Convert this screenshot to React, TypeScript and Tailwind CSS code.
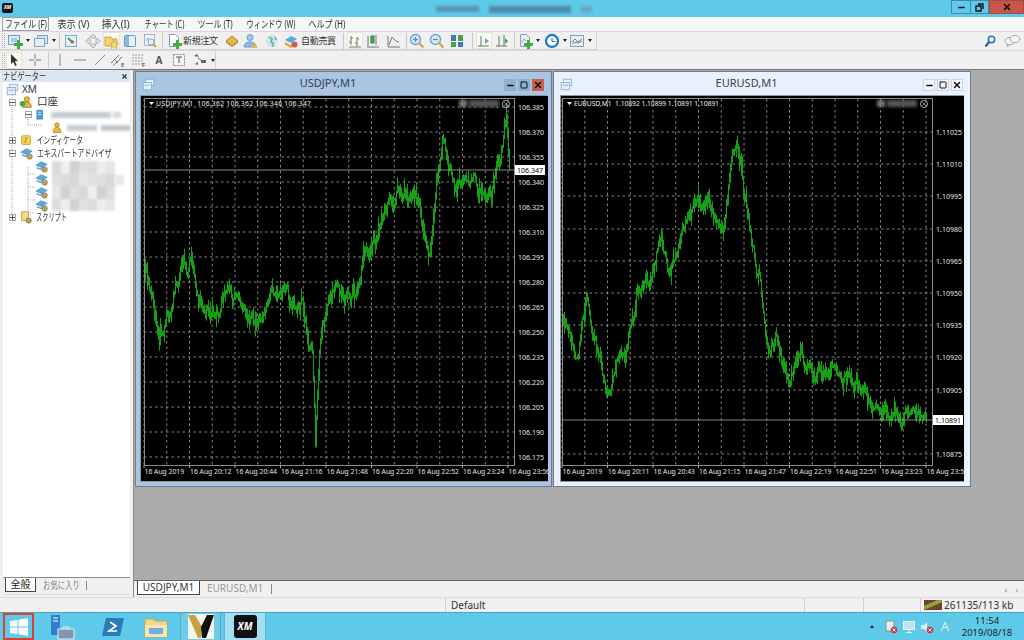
import type { ReactNode } from 'react';
import { Minus, Square, X } from 'lucide-react';

// small icon wrapper, everything in a 16x16 box
function I({ children, s = 16 }: { children: ReactNode; s?: number }) {
  return (
    <svg width={s} height={s} viewBox="0 0 16 16" className="shrink-0">
      {children}
    </svg>
  );
}

const Plus = () => <path d="M10 7h3v3h3v3h-3v3h-3v-3H7v-3h3z" fill="#3cae3c" />;
const Arrow = () => <span className="ml-[3px] w-0 h-0 border-x-[2.5px] border-x-transparent border-t-[3px] border-t-[#222]" />;

const ChartWin = () => (
  <>
    <rect x="1.5" y="2.5" width="11" height="9" fill="#dbe9f7" stroke="#6f9cc4" />
    <rect x="4" y="5" width="6" height="4" fill="#a4cbea" />
  </>
);
const WinIcon = () => (
  <I s={13}>
    <rect x="4.5" y="1.5" width="10" height="8" fill="#e6f0fa" stroke="#7fabd2" />
    <rect x="1.5" y="5.5" width="10" height="9" fill="#e6f0fa" stroke="#7fabd2" />
    <path d="M3 8h7v2H3z" fill="#a8cbe8" />
  </I>
);
const Gear = () => <circle cx="11" cy="12" r="3" fill="#c9a23a" stroke="#7b7b7b" />;
const EaIcon = () => (
  <I s={14}>
    <path d="M1 7l6-4 7 3-6 4z" fill="#5aa8dc" stroke="#3f7fab" strokeWidth=".6" />
    <path d="M2 10l5 2 4-2" fill="none" stroke="#5aa8dc" strokeWidth="1.6" />
    <Gear />
  </I>
);
const Bars = () => (
  <path d="M4 3v9M2 9h2M4 5h2M10 4v9M8 10h2M10 6h2M2 14h12" stroke="#5f7a68" fill="none" />
);
const Triangle = () => <span className="w-0 h-0 border-x-[2.5px] border-x-transparent border-b-[3px] border-b-[#222]" />;

function Sep() {
  return (
    <div className="w-[6px] h-[16px] flex justify-center shrink-0">
      <div className="w-px bg-[#c8c8c8]" />
    </div>
  );
}

function Tb({ className, on, children }: { className: string; on?: boolean; children: ReactNode }) {
  return (
    <div className={`h-[17px] flex items-center justify-center shrink-0 ${on ? 'bg-[#fbfaf2] border border-[#e4e4da]' : ''} ${className}`}>
      {children}
    </div>
  );
}

function Grip() {
  return <div className="w-[3px] h-[15px] ml-[2px] mr-px border-x border-dotted border-[#b5b5b5] shrink-0" />;
}

// label, box classes, squeeze for the narrow kana of the original UI font
const menus: [string, string, string][] = [
  ['ファイル (F)', 'w-[47px] ml-[2px] border border-[#a0a0a0]', 'scale-x-[.78]'],
  ['表示 (V)', 'w-[36px] ml-[6px]', 'scale-x-[.92]'],
  ['挿入(I)', 'w-[30px] ml-[10px]', 'scale-x-[.95]'],
  ['チャート (C)', 'w-[44px] ml-[11px]', 'scale-x-[.73]'],
  ['ツール (T)', 'w-[38px] ml-[10px]', 'scale-x-[.8]'],
  ['ウィンドウ (W)', 'w-[52px] ml-[11px]', 'scale-x-[.72]'],
  ['ヘルプ (H)', 'w-[40px] ml-[10px]', 'scale-x-[.8]'],
];

// price walk for the charts, [x, y] in page pixels
const jpyPath = [
  [144, 270], [150, 292], [158, 335], [165, 318], [172, 292], [180, 272], [190, 258], [200, 300], [215, 312], [225, 292],
  [240, 302], [255, 322], [265, 302], [280, 296], [300, 302], [306, 335], [311, 348], [314, 436], [318, 350], [325, 305],
  [335, 278], [345, 298], [355, 292], [362, 258], [375, 238], [385, 200], [400, 186], [415, 196], [428, 245], [435, 185],
  [441, 132], [450, 175], [470, 185], [490, 192], [498, 170], [505, 122], [509, 172],
];
const eurPath = [
  [562, 322], [575, 350], [585, 292], [595, 348], [605, 388], [612, 370], [625, 345], [635, 292], [650, 272], [660, 238],
  [668, 268], [680, 232], [695, 205], [715, 205], [722, 228], [728, 190], [734, 138], [742, 190], [752, 245], [760, 288],
  [766, 350], [775, 330], [785, 378], [800, 350], [815, 368], [830, 368], [845, 378], [860, 388], [875, 406], [895, 416],
  [915, 426], [926, 420],
];

function sticks(path: number[][], seed: number) {
  let s = seed;
  const rnd = () => {
    s = (s * 16807) % 2147483647;
    return s / 2147483647;
  };
  let d = '';
  let wander = 0;
  let prev = path[0][1];
  for (let i = 0; i < path.length - 1; i++) {
    const [x0, y0] = path[i];
    const [x1, y1] = path[i + 1];
    for (let x = x0; x < x1; x += 1) {
      const y = y0 + ((y1 - y0) * (x - x0)) / (x1 - x0);
      wander = wander * 0.7 + (rnd() - 0.5) * 14;
      const cur = y + wander;
      const up = 1 + rnd() * rnd() * 13;
      const dn = 1 + rnd() * rnd() * 13;
      d += `M${x + 0.5} ${(Math.min(cur, prev) - up).toFixed(1)}V${(Math.max(cur, prev) + dn).toFixed(1)}`;
      prev = cur;
    }
  }
  return d;
}

interface ChartProps {
  x0: number;
  w: number;
  plotL: number;
  plotR: number;
  head: string;
  headW: number;
  prices: [string, number][];
  times: string[];
  path: number[][];
  seed: number;
  last: string;
  lastY: number;
  blurX: number;
}

// the chart is a drawing, coordinates below are page pixels through the viewBox
function Chart({ x0, w, plotL, plotR, head, headW, prices, times, path, seed, last, lastY, blurX }: ChartProps) {
  const vLines = Array.from({ length: 17 }, (_, i) => plotL + i * 22.75);
  return (
    <svg width={w} height={385} viewBox={`${x0} 94 ${w} 385`} className="block bg-black">
      <g stroke="#a8a8a8" strokeDasharray="2.5 3" strokeWidth=".8">
        {prices.map(([, y]) => (
          <line key={y} x1={plotL} x2={plotR} y1={y} y2={y} />
        ))}
        {vLines.map((x) => (
          <line key={x} x1={x} x2={x} y1={97} y2={463} />
        ))}
      </g>
      <path d={sticks(path, seed)} stroke="#16a016" strokeWidth="1" fill="none" />
      <line x1={plotL} x2={plotR} y1={lastY} y2={lastY} stroke="#a8a8a8" strokeWidth=".8" />
      <rect x={plotL + 0.5} y={96.5} width={plotR - plotL} height={367} fill="none" stroke="#8c8c8c" />
      <path d={`M${plotL + 5} 100h5l-2.5 3z`} fill="#fff" />
      <text x={plotL + 12} y={103.5} fill="#eee" fontSize="6.8" textLength={headW} xmlSpace="preserve">{head}</text>
      <g className="blur-[1.5px]">
        <rect x={blurX} y={98} width="8" height="7" fill="#777" />
        <rect x={blurX + 10} y={98} width="30" height="7" fill="#555" />
      </g>
      <circle cx={blurX + 47} cy={102} r="3.6" fill="none" stroke="#ccc" strokeWidth=".8" />
      <path d={`M${blurX + 45} 100l4 4M${blurX + 49} 100l-4 4`} stroke="#ccc" strokeWidth=".6" />
      {prices.map(([label, y]) => (
        <text key={label} x={plotR + 4} y={y + 2.5} fill="#e4e4e4" fontSize="7">{label}</text>
      ))}
      <rect x={plotR + 1} y={lastY - 5} width="30" height="10" fill="#fff" />
      <text x={plotR + 3} y={lastY + 2.5} fill="#000" fontSize="7">{last}</text>
      {times.map((t, i) => (
        <g key={t}>
          <line x1={plotL + i * 45.5} x2={plotL + i * 45.5} y1={463} y2={466} stroke="#aaa" />
          <text x={plotL + 0.5 + i * 45.5} y={472} fill="#e4e4e4" fontSize="6.8">{t}</text>
        </g>
      ))}
    </svg>
  );
}

function ChartWindow({ title, active, children, className, inset }: { title: string; active?: boolean; children: ReactNode; className: string; inset: string }) {
  return (
    <div className={`h-[416px] border border-[#6d7b8a] shrink-0 flex flex-col ${active ? 'bg-[#a9c5e1]' : 'bg-[#e9f1fc]'} ${className}`}>
      <div className="h-[23px] relative flex items-center justify-center pr-[31px] shrink-0">
        <div className="absolute left-[6px] top-[6px]"><WinIcon /></div>
        <span className="text-[11px] text-[#33414f]">{title}</span>
        <div className="absolute right-[7px] top-[7px] flex gap-[2px]">
          <div className={`w-[12px] h-[12px] flex items-center justify-center ${active ? 'bg-[#8fb0d2]' : 'bg-[#f3f7fd] border border-[#ccd5e0]'}`}>
            <Minus size={9} strokeWidth={4} color="#111" />
          </div>
          <div className={`w-[12px] h-[12px] flex items-center justify-center ${active ? 'bg-[#8fb0d2]' : 'bg-[#f3f7fd] border border-[#ccd5e0]'}`}>
            <Square size={8} strokeWidth={3} color="#111" />
          </div>
          <div className={`w-[12px] h-[12px] flex items-center justify-center ${active ? 'bg-[#c8604f]' : 'bg-[#f3f7fd] border border-[#ccd5e0]'}`}>
            <X size={10} strokeWidth={3.5} color="#111" />
          </div>
        </div>
      </div>
      <div className={inset}>{children}</div>
    </div>
  );
}

function Exp({ open }: { open?: boolean }) {
  return (
    <div className="w-[7px] h-[7px] border border-[#a4a4a4] bg-white flex items-center justify-center relative shrink-0">
      <div className="w-[5px] h-px bg-[#555]" />
      {!open && <div className="absolute w-px h-[5px] bg-[#555]" />}
    </div>
  );
}

function Row({ className, children }: { className: string; children: ReactNode }) {
  return <div className={`h-[12.8px] flex items-center text-[10px] text-[#333] whitespace-nowrap relative ${className}`}>{children}</div>;
}

// katakana labels set in a narrow UI font in the reference
function Kana({ className, children }: { className: string; children: ReactNode }) {
  return <span className={`inline-block origin-left ${className}`}>{children}</span>;
}

const mosaic = ['#dcdcdc', '#e2e0e0', '#e8e6e6', '#d8d6d6', '#e0dede', '#d2d0d0', '#eeeeee'];

export default function App() {
  return (
    <div className="w-[1024px] h-[640px] flex flex-col overflow-hidden bg-[#f0f0f0] text-[#333] font-['Noto_Sans','Noto_Sans_CJK_JP',sans-serif]">
      {/* title bar */}
      <div className="h-[17px] bg-[#5fc9ea] flex items-start relative shrink-0">
        <div className="ml-[2px] mt-[3px] w-[11px] h-[10px] bg-[#111] rounded-[2px] text-white text-[5px] italic font-bold flex items-center justify-center">XM</div>
        <div className="absolute left-[436px] top-[6px] flex gap-[10px] blur-[1.5px]">
          <div className="w-[43px] h-[6px] bg-[#5a93b4]" />
          <div className="w-[82px] h-[7px] bg-[#4f8aa9]" />
          <div className="w-[11px] h-[6px] bg-[#6ba3c0]" />
        </div>
        <div className="ml-auto flex h-[14px]">
          <div className="w-[20px] border border-[#3d8aa8] flex items-center justify-center"><Minus size={9} strokeWidth={4} color="#111" /></div>
          <div className="w-[18px] border-y border-r border-[#3d8aa8] flex items-center justify-center">
            <svg width="9" height="9" viewBox="0 0 9 9"><path d="M3 1h5v5M1 3h5v5H1z" fill="none" stroke="#111" strokeWidth="1.4" /></svg>
          </div>
          <div className="w-[35px] bg-[#c8564c] border border-[#a34a44] flex items-center justify-center"><X size={10} strokeWidth={4} color="#111" /></div>
        </div>
      </div>

      {/* menu */}
      <div className="h-[15px] bg-[#f5f6f7] border-b border-[#d8d8d8] flex items-center text-[10px] shrink-0">
        {menus.map(([label, cls, squeeze]) => (
          <div key={label} className={`h-[14px] flex items-center justify-center whitespace-nowrap shrink-0 ${cls}`}>
            <span className={`inline-block ${squeeze}`}>{label}</span>
          </div>
        ))}
      </div>

      {/* toolbar 1 */}
      <div className="h-[19px] flex items-center border-b border-[#dcdcdc] shrink-0 relative">
        <div className="flex items-center w-[597px] h-full border-r border-[#d0d0d0] border-b">
          <Grip />
          <Tb className="w-[24px]"><I><ChartWin /><Plus /></I><Arrow /></Tb>
          <Tb className="w-[24px] ml-[2px]"><I><rect x="4.5" y="2.5" width="10" height="8" fill="#cfe2f5" stroke="#7ba5cb" /><rect x="1.5" y="5.5" width="10" height="8" fill="#e4eff9" stroke="#7ba5cb" /></I><Arrow /></Tb>
          <Sep />
          <Tb className="w-[18px]"><I><rect x="2.5" y="2.5" width="11" height="11" fill="#e2eef9" stroke="#7fadd4" /><path d="M5 5l3 3 3 1" stroke="#3cae3c" strokeWidth="2" fill="none" /><circle cx="9" cy="9" r="1.6" fill="#d9534f" /></I></Tb>
          <Tb className="w-[20px] ml-[3px]"><I><path d="M8 1l3 3-1 1h-4L5 4zM1 8l3-3 1 1v4l-1 1zM15 8l-3-3-1 1v4l1 1zM8 15l3-3-1-1H6l-1 1z" fill="#e0e5ea" stroke="#8c97a2" strokeWidth=".7" /></I></Tb>
          <Tb className="w-[17px]" on><I><path d="M1 4h6l1 2h5v7H1z" fill="#f1d678" stroke="#c9a23f" /><path d="M10 7l1.5 3 3 .3-2.2 2 .7 3-3-1.6-2.7 1.6.6-3-2.1-2 3-.3z" fill="#f6de78" stroke="#bb973c" strokeWidth=".6" /></I></Tb>
          <Tb className="w-[20px]"><I><rect x="2.5" y="2.5" width="11" height="11" rx="1" fill="#e6f0f9" stroke="#6f96bd" /><rect x="3" y="3" width="4" height="10" fill="#8db8de" /></I></Tb>
          <Tb className="w-[19px]"><I><rect x="2.5" y="1.5" width="10" height="11" fill="#eef4fb" stroke="#a0b5cc" /><circle cx="9" cy="9" r="3" fill="#e4eef8" stroke="#8ba2ba" /><path d="M11 11l3 3" stroke="#c9a23a" strokeWidth="2" /><path d="M4 8l2-3 2 2" stroke="#6fb0dc" fill="none" /></I></Tb>
          <Sep />
          <div className="w-[52px] flex items-center shrink-0 ml-px text-[9px] tracking-[-0.3px] whitespace-nowrap">
            <I><path d="M3.5 1.5h6l3 3v9h-9z" fill="#fff" stroke="#7f9ab4" /><Plus /></I>
            <span className="ml-px">新規注文</span>
          </div>
          <Tb className="w-[20px] ml-[4px]"><I><path d="M2 8l6-5 6 5-6 5z" fill="#e5bb48" stroke="#a6862c" /><path d="M2 8l6 5 6-5v2l-6 4-6-4z" fill="#c0924a" /></I></Tb>
          <Tb className="w-[16px]"><I><circle cx="8" cy="4.5" r="3" fill="#a4cbea" stroke="#6f9cc4" /><path d="M2 14c0-4 3-5 6-5s6 1 6 5z" fill="#8fbae2" stroke="#6f9cc4" /><path d="M10 12h5v3h-5z" fill="#e7b93c" /></I></Tb>
          <Tb className="w-[20px] ml-[4px]"><I><circle cx="8" cy="8" r="6" fill="#cfe3f2" /><path d="M5 4l3 2-1 3 2 1v4M11 4l1 3" stroke="#6fb96f" strokeWidth="1.6" fill="none" /></I></Tb>
          <div className="w-[52px] flex items-center shrink-0 ml-px text-[9px] tracking-[-0.3px] whitespace-nowrap">
            <I><path d="M2 7l6-4 6 3-6 4z" fill="#5aa8dc" /><path d="M2 9l6 3 6-3v3l-6 3-6-3z" fill="#e7a84c" /><circle cx="11.5" cy="11.5" r="3" fill="#d9534f" /></I>
            <span className="ml-[2px]">自動売買</span>
          </div>
          <div className="ml-[5px]"><Sep /></div>
          <Tb className="w-[16px] ml-px" on><I><Bars /></I></Tb>
          <Tb className="w-[16px] ml-[2px]"><I><path d="M3 3v10M11 2v10" stroke="#5f7a68" /><rect x="6" y="3" width="3" height="7" fill="#3cae3c" stroke="#3f7f3f" /><path d="M2 14h12" stroke="#5f7a68" /></I></Tb>
          <Tb className="w-[18px] ml-[4px]"><I><path d="M2 3v11h12" stroke="#6b7b70" fill="none" /><path d="M3 12l3-8 4 4 3 1" stroke="#6b7b70" fill="none" /></I></Tb>
          <Sep />
          <Tb className="w-[16px]"><I><circle cx="6.5" cy="6.5" r="5" fill="#d8ebf9" stroke="#6fa4cc" strokeWidth="1.4" /><path d="M10 10l4.5 4.5" stroke="#d2a640" strokeWidth="2.2" /><path d="M4 6.5h5M6.5 4v5" stroke="#4f94cc" strokeWidth="1.3" /></I></Tb>
          <Tb className="w-[20px] ml-[2px]"><I><circle cx="6.5" cy="6.5" r="5" fill="#d8ebf9" stroke="#6fa4cc" strokeWidth="1.4" /><path d="M10 10l4.5 4.5" stroke="#d2a640" strokeWidth="2.2" /><path d="M4 6.5h5" stroke="#4f94cc" strokeWidth="1.3" /></I></Tb>
          <Tb className="w-[20px]"><I><path d="M2 2h5v6H2z" fill="#3f78b8" /><path d="M9 2h5v6H9z" fill="#3fa84f" /><path d="M2 9h5v5H2z" fill="#3fa84f" /><path d="M9 9h5v5H9z" fill="#3f78b8" /></I></Tb>
          <div className="ml-[2px]"><Sep /></div>
          <Tb className="w-[16px] ml-px" on><I><path d="M5 3v10M2 13h11" stroke="#5f7a68" fill="none" /><path d="M9 5l4 3-4 3z" fill="#6fa4cc" /></I></Tb>
          <Tb className="w-[16px] ml-[2px]"><I><path d="M5 3v10M10 2v11M2 13h11" stroke="#5f7a68" fill="none" /><path d="M11 5l3 3-3 3z" fill="#3fa84f" /></I></Tb>
          <div className="ml-px"><Sep /></div>
          <Tb className="w-[24px] justify-start"><I><path d="M3.5 1.5h6l3 3v9h-9z" fill="#e8eef5" stroke="#8ba0b6" /><path d="M5 9l2-3 2 2" stroke="#6fb0dc" fill="none" /><Plus /></I><Arrow /></Tb>
          <Tb className="w-[24px] ml-[3px] justify-start"><I><circle cx="8" cy="8" r="6" fill="#fff" stroke="#1f7fc8" strokeWidth="2.4" /><path d="M8 5v3.5h3" stroke="#1f5f98" fill="none" /></I><Arrow /></Tb>
          <Tb className="w-[26px] ml-px justify-start"><I><rect x="1.5" y="2.5" width="13" height="11" fill="#e6eef7" stroke="#7f9fc0" /><path d="M3 9l3-3 3 3 4-3" stroke="#d9534f" fill="none" /><path d="M3 11l3-2 3 1 4-2" stroke="#3fa84f" fill="none" /></I><Arrow /></Tb>
        </div>
        <div className="absolute left-[984px] top-[3px]">
          <svg width="12" height="13" viewBox="0 0 12 13"><circle cx="7.500" cy="4.500" r="3.200" fill="#eef5fb" stroke="#2f6fb8" strokeWidth="1.500" /><path d="M5 7L1.500 11.500" stroke="#2f5f9f" strokeWidth="2.200" /></svg>
        </div>
        <div className="absolute left-[1004px] top-[2px]">
          <svg width="17" height="13" viewBox="0 0 17 13"><ellipse cx="6" cy="7" rx="5" ry="3.6" fill="#f4f4f4" stroke="#aaa" /><ellipse cx="11" cy="5" rx="5" ry="3.6" fill="#f4f4f4" stroke="#aaa" /><path d="M4 10l-1 3 3-2" fill="#f4f4f4" stroke="#aaa" /></svg>
        </div>
      </div>

      {/* toolbar 2 */}
      <div className="h-[18px] flex items-center shrink-0">
        <div className="flex items-center w-[216px] h-full border-r border-[#d0d0d0]">
          <Grip />
          <Tb className="w-[16px]" on><I><path d="M5 2l7 7-3.200 .2 2 4-1.600 .8-2-4L5 12z" fill="#333" /></I></Tb>
          <Tb className="w-[20px] ml-[3px]"><I><path d="M8 2v5M8 9v5M2 8h5M9 8h5" stroke="#777" /></I></Tb>
          <Sep />
          <Tb className="w-[18px]"><I><path d="M8 2v12" stroke="#888" /></I></Tb>
          <Tb className="w-[20px] ml-px"><I><path d="M2 8h12" stroke="#888" /></I></Tb>
          <Tb className="w-[20px]"><I><path d="M3 13L13 3" stroke="#888" /></I></Tb>
          <Tb className="w-[16px]"><I><path d="M1 11L9 3M3 14L12 5M5 8l3 3" stroke="#777" /><text x="11" y="15" fontSize="6" fill="#333">E</text></I></Tb>
          <Tb className="w-[20px] ml-[3px]"><I><path d="M1 3h12M1 6h12M1 9h12M1 12h12" stroke="#9a9a9a" strokeDasharray="2 1" /><text x="11" y="15" fontSize="6" fill="#333">F</text></I></Tb>
          <Tb className="w-[20px]"><span className="text-[10px] font-bold text-[#555]">A</span></Tb>
          <Tb className="w-[20px]"><I><rect x="2.500" y="2.500" width="11" height="11" fill="#f4f4f4" stroke="#888" strokeDasharray="2 1" /><path d="M5 5h6M8 5v6" stroke="#555" /></I></Tb>
          <Tb className="w-[24px] ml-[2px]"><I><path d="M2 4l3-2 2 3zM9 8h5v3H9zM3 12l3-2v3z" fill="#667" /><path d="M6 6l4 3" stroke="#667" /></I><Arrow /></Tb>
        </div>
      </div>

      {/* main: navigator runs down beside the chart area and its tabs */}
      <div className="h-[528px] flex border-t border-[#777] shrink-0">
        <div className="w-[134px] h-full shrink-0 bg-[#f0f0f0] pl-[1px] pr-[3px] flex flex-col border-r border-[#8a8a8a]">
          <div className="h-[12px] bg-[#dbe6f3] flex items-center justify-between pl-[2px] pr-[2px] text-[10px] shrink-0 whitespace-nowrap">
            <Kana className="scale-x-[.72]">ナビゲーター</Kana>
            <X size={7} strokeWidth={4} color="#333" />
          </div>
          <div className="flex-1 bg-white ml-[2px] border-b border-[#888] relative overflow-hidden">
            <div className="relative">
              <svg width="70" height="140" viewBox="0 0 70 140" className="absolute left-0 top-0">
                <path d="M9 12v123M9 58h4M25 30v12M25 42h14M25 84v46M25 91h7M25 104h7M25 117h7M25 130h7" stroke="#aaa" strokeDasharray="1 1" fill="none" />
              </svg>
              <Row className="pl-[3px] mt-[1px]"><WinIcon /><span className="ml-[3px]">XM</span></Row>
              <Row className="pl-[6px]"><Exp open /><span className="ml-[3px]"><I s={14}><circle cx="9" cy="5" r="3" fill="#e7b93c" stroke="#a87c1c" /><path d="M4 14c0-4 2-6 5-6s5 2 5 6z" fill="#e7b93c" stroke="#a87c1c" /><circle cx="4" cy="10" r="3.200" fill="#3fa84f" /></I></span><span className="ml-[4px] text-[10.5px]">口座</span></Row>
              <Row className="pl-[22px]">
                <Exp open />
                <span className="ml-[2px]"><I s={13}><path d="M3 1h8v12H3z" fill="#3f9ad8" /><path d="M5 4h4M5 7h4" stroke="#fff" /></I></span>
                <div className="ml-[4px] flex gap-[2px] blur-[1.5px]"><div className="w-[60px] h-[6px] bg-[#c4cad0]" /><div className="w-[8px] h-[6px] bg-[#d4d8dc]" /></div>
              </Row>
              <Row className="pl-[48px]">
                <I s={12}><circle cx="8" cy="4" r="3" fill="#e7b93c" stroke="#a87c1c" /><path d="M3 14c0-5 2-7 5-7s5 2 5 7z" fill="#e7b93c" stroke="#a87c1c" /></I>
                <div className="ml-[4px] flex gap-[4px] blur-[1.5px]"><div className="w-[30px] h-[6px] bg-[#c8ccd0]" /><div className="w-[30px] h-[6px] bg-[#c0c4c8]" /></div>
              </Row>
              <Row className="pl-[6px]"><Exp /><span className="ml-[4px]"><I s={13}><rect x="2" y="2" width="11" height="11" rx="2" fill="#f2cf5a" stroke="#c49a2c" /><path d="M8 4L6 11" stroke="#a87c1c" strokeWidth="1.2" /></I></span><Kana className="ml-[4px] scale-x-[.66]">インディケータ</Kana></Row>
              <Row className="pl-[6px]"><Exp open /><span className="ml-[4px]"><EaIcon /></span><Kana className="ml-[3px] scale-x-[.68]">エキスパートアドバイザ</Kana></Row>
              <Row className="pl-[32px]"><EaIcon /></Row>
              <Row className="pl-[32px]"><EaIcon /></Row>
              <Row className="pl-[32px]"><EaIcon /></Row>
              <Row className="pl-[32px]"><EaIcon /></Row>
              <Row className="pl-[6px]"><Exp /><span className="ml-[3px]"><I s={14}><path d="M3 2h8v10H3z" fill="#f2dc8a" stroke="#b89a3c" /><Gear /></I></span><Kana className="ml-[3px] scale-x-[.62]">スクリプト</Kana></Row>
              {/* pixelated names */}
              <div className="absolute left-[49px] top-[78px] w-[63px] h-[50px] grid grid-cols-7 blur-[1px]">
                {Array.from({ length: 28 }, (_, i) => (
                  <div key={i} style={{ backgroundColor: mosaic[(i * 5 + (i % 3)) % 7] }} />
                ))}
              </div>
              <div className="absolute left-[112px] top-[92px] w-[9px] h-[10px] bg-[#e8e8e8] blur-[1px]" />
            </div>
          </div>
          <div className="h-[17px] shrink-0 ml-[2px] flex items-start bg-[#f0f0f0] border-b border-[#ddd] mb-[2px] text-[10px] whitespace-nowrap">
            <div className="ml-[2px] w-[31px] h-[14px] bg-white border-x border-b border-[#444] flex items-center justify-center text-[#222]">全般</div>
            <div className="ml-[7px] w-[37px] text-[#888] h-[14px] flex items-center"><Kana className="scale-x-[.74]">お気に入り</Kana></div>
            <div className="ml-[6px] mt-[3px] w-px h-[9px] bg-[#888]" />
          </div>
        </div>

        <div className="flex-1 flex flex-col min-w-0">
          <div className="h-[510px] bg-[#ababab] flex gap-[1px] items-start pt-[1px] pl-px shrink-0">
            <ChartWindow title="USDJPY,M1" active className="w-[417px]" inset="mx-[4px] border border-[#8a97a5]">
              <Chart
                x0={140}
                w={407}
                plotL={143}
                plotR={513}
                head={'USDJPY,M1  106.362 106.362 106.346 106.347'}
                headW={155}
                prices={[['106.385', 105], ['106.370', 130], ['106.355', 155], ['106.340', 180], ['106.325', 205], ['106.310', 230], ['106.295', 255], ['106.280', 280], ['106.265', 305], ['106.250', 330], ['106.235', 355], ['106.220', 380], ['106.205', 405], ['106.190', 430], ['106.175', 455]]}
                times={['16 Aug 2019', '16 Aug 20:12', '16 Aug 20:44', '16 Aug 21:16', '16 Aug 21:48', '16 Aug 22:20', '16 Aug 22:52', '16 Aug 23:24', '16 Aug 23:56']}
                path={jpyPath}
                seed={4711}
                last="106.347"
                lastY={168}
                blurX={458}
              />
            </ChartWindow>
            <ChartWindow title="EURUSD,M1" className="w-[418px]" inset="mx-[6px] border border-[#8a97a5]">
              <Chart
                x0={560}
                w={403}
                plotL={561}
                plotR={931}
                head={'EURUSD,M1  1.10892 1.10899 1.10891 1.10891'}
                headW={145}
                prices={[['1.11025', 130], ['1.11010', 162], ['1.10995', 194], ['1.10980', 227], ['1.10965', 259], ['1.10950', 291], ['1.10935', 323], ['1.10920', 355], ['1.10905', 388], ['1.10875', 452]]}
                times={['16 Aug 2019', '16 Aug 20:11', '16 Aug 20:43', '16 Aug 21:15', '16 Aug 21:47', '16 Aug 22:19', '16 Aug 22:51', '16 Aug 23:23', '16 Aug 23:56']}
                path={eurPath}
                seed={9127}
                last="1.10891"
                lastY={418}
                blurX={876}
              />
            </ChartWindow>
          </div>

          {/* chart tabs */}
          <div className="flex-1 border-t border-[#666] flex items-start text-[10px]">
            <div className="ml-[3px] w-[63px] h-[14px] bg-white border-x border-b border-[#444] flex items-center justify-center">USDJPY,M1</div>
            <div className="ml-[7px] h-[14px] flex items-center text-[#999]">EURUSD,M1</div>
            <div className="ml-[8px] mt-[3px] w-px h-[10px] bg-[#888]" />
            <div className="ml-auto mr-[6px] mt-[2px] flex gap-[8px] text-[#888] text-[9px]"><span>‹</span><span>›</span></div>
          </div>
        </div>
      </div>

      {/* status bar */}
      <div className="h-[15px] border-t border-[#ddd] flex items-center text-[10px] shrink-0">
        <div className="w-[445px] h-full" />
        <div className="w-[359px] h-full border-l border-[#d0d0d0] pl-[5px] flex items-center">Default</div>
        <div className="w-[59px] h-full border-l border-[#d0d0d0]" />
        <div className="w-[57px] h-full border-l border-[#d0d0d0]" />
        <div className="flex-1 h-full border-l border-[#d0d0d0] pl-[3px] flex items-center whitespace-nowrap">
          <svg width="18" height="10" viewBox="0 0 18 10" className="mr-[2px] shrink-0">
            <rect width="18" height="10" fill="#5a3a2a" />
            <path d="M0 8L18 0" stroke="#7cbc3c" strokeWidth="4" />
            <path d="M2 10V0M5 10V0M8 10V0M11 10V0M14 10V0M17 10V0" stroke="#c8543c" strokeWidth=".7" />
          </svg>
          261135/113 kb
        </div>
      </div>

      {/* taskbar */}
      <div className="h-[28px] bg-[#5fc9ea] border-t border-[#4aa3c2] flex items-center shrink-0">
        <div className="ml-[3px] w-[31px] h-[27px] border-2 border-[#d9402e] flex items-center justify-center">
          <svg width="18" height="18" viewBox="0 0 18 18"><path d="M0 3l7.500-1v6.500H0zM8.500 1.800L18 0v8.500H8.500zM0 9.500h7.500V16L0 15zM8.500 9.500H18V18l-9.500-1.800z" fill="#fff" /></svg>
        </div>
        <div className="w-[36px] ml-[10px] flex justify-center">
          <svg width="25" height="26" viewBox="0 0 25 26"><path d="M1 1h9v20H1z" fill="#2f7fd0" /><path d="M3 4h5M3 7h5" stroke="#fff" /><rect x="8" y="15" width="16" height="10" fill="#7f98ad" stroke="#e8eef4" /><path d="M13 15v-2h6v2" stroke="#e8eef4" fill="none" /></svg>
        </div>
        <div className="w-[24px] ml-[21px] flex justify-center">
          <svg width="22" height="20" viewBox="0 0 22 20"><path d="M4 1h18l-4 18H0z" fill="#2a7ab8" /><path d="M8 5l6 4-7 5h8" stroke="#fff" strokeWidth="1.6" fill="none" /></svg>
        </div>
        <div className="w-[24px] ml-[19px] flex justify-center">
          <svg width="24" height="22" viewBox="0 0 24 22"><path d="M1 3h8l2 2h12v16H1z" fill="#f2d98a" stroke="#c8a84c" /><path d="M1 9h22v12H1z" fill="#f6e6ae" /><rect x="5" y="12" width="14" height="6" fill="#6fb0e0" /></svg>
        </div>
        <div className="ml-[12px] w-[41px] h-[27px] bg-[#6fcbe8] border-x border-[#58aac8] flex items-center justify-center">
          <svg width="26" height="25" viewBox="0 0 26 25"><rect width="26" height="25" fill="#f4f4f0" /><path d="M0 1h7l7 12-1 11h-3z" fill="#c9a23c" /><path d="M26 1h-7l-6 12 1 11h4z" fill="#111" /></svg>
        </div>
        <div className="ml-[3px] w-[42px] h-[27px] bg-[#a3dff2] border-x border-[#68b4d0] flex items-center justify-center">
          <div className="w-[23px] h-[23px] bg-[#111] rounded-[3px] flex items-center justify-center text-white text-[10px] font-bold italic">XM</div>
        </div>
        <div className="ml-auto flex items-center">
          <div className="mr-[8px] flex items-center"><Triangle /></div>
          <div className="w-[18px] flex justify-center">
            <svg width="14" height="14" viewBox="0 0 14 14"><path d="M2 1h8v10H2z" fill="#e4eef4" stroke="#80909c" /><circle cx="10" cy="10" r="3.200" fill="#d0352f" /><path d="M8.500 8.500l3 3M11.500 8.500l-3 3" stroke="#fff" /></svg>
          </div>
          <div className="w-[18px] flex justify-center">
            <svg width="14" height="14" viewBox="0 0 14 14"><rect x="1.500" y="1.500" width="11" height="8" fill="#bfe4f0" stroke="#e8f4f8" /><path d="M7 9.500v3M4 12.500h6" stroke="#e8f4f8" /></svg>
          </div>
          <div className="w-[18px] flex justify-center">
            <svg width="14" height="14" viewBox="0 0 14 14"><path d="M1 5h3l3-3v10L4 9H1z" fill="#d8ecf4" /><circle cx="10" cy="10" r="3.200" fill="#d0352f" /><path d="M8.500 8.500l3 3M11.500 8.500l-3 3" stroke="#fff" /></svg>
          </div>
          <div className="w-[18px] text-center text-[13px] text-[#d8eef6] leading-none">A</div>
          <div className="w-[66px] mr-[4px] text-center text-[9.5px] leading-[11.5px] text-[#222] flex flex-col">
            <span>11:54</span>
            <span>2019/08/18</span>
          </div>
        </div>
      </div>
    </div>
  );
}
